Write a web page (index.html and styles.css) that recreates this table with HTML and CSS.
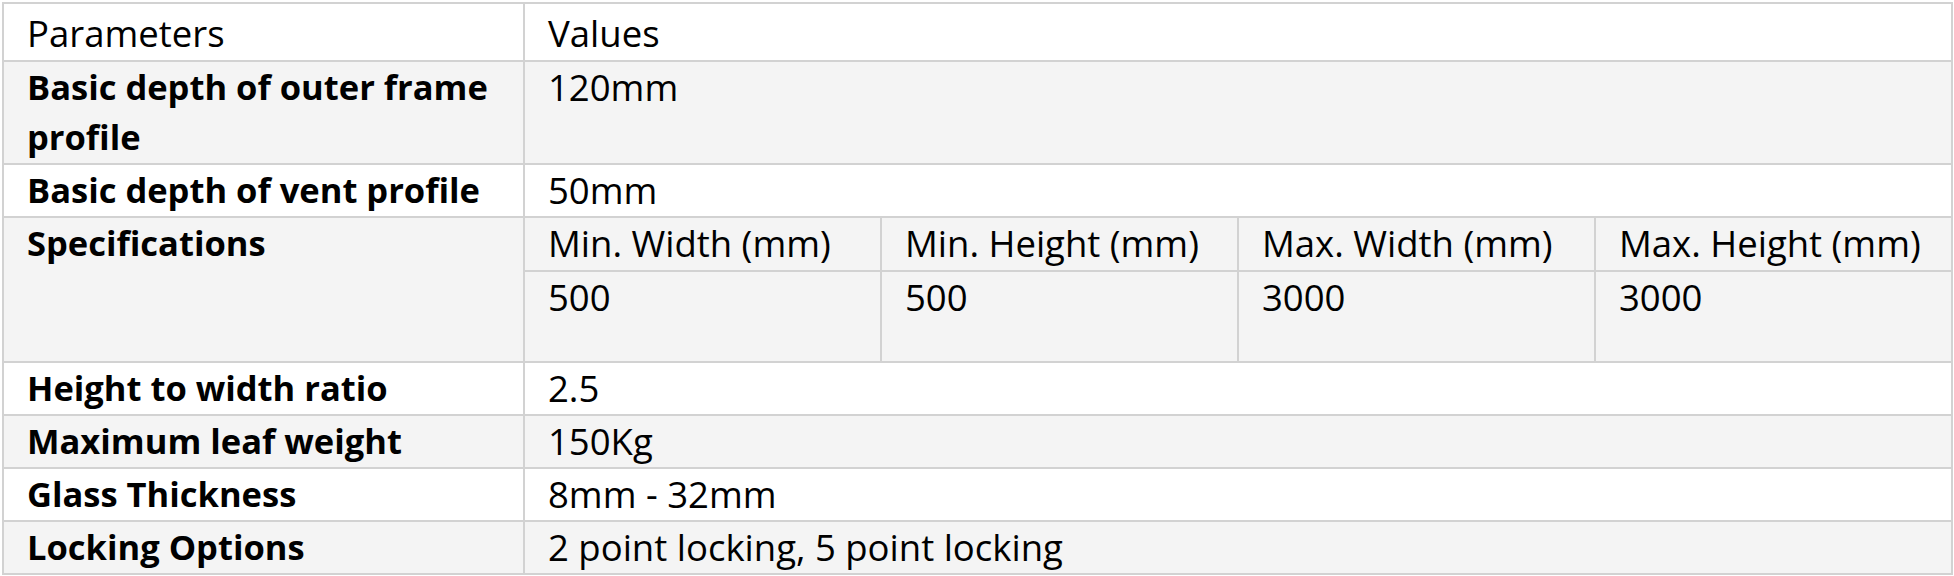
FILE: index.html
```html
<!DOCTYPE html>
<html lang="en">
<head>
<meta charset="utf-8">
<title>Parameters</title>
<link rel="stylesheet" href="styles.css">
</head>
<body>
<table class="spec-table">
  <colgroup>
    <col class="col-param">
    <col class="col-val">
    <col class="col-val">
    <col class="col-val">
    <col class="col-val">
  </colgroup>
  <tbody>
    <tr class="row-head">
      <td>Parameters</td>
      <td colspan="4">Values</td>
    </tr>
    <tr class="row-alt row-two">
      <th>Basic depth of outer frame profile</th>
      <td colspan="4">120mm</td>
    </tr>
    <tr class="row-one">
      <th>Basic depth of vent profile</th>
      <td colspan="4">50mm</td>
    </tr>
    <tr class="row-alt row-sub">
      <th rowspan="2">Specifications</th>
      <td>Min. Width (mm)</td>
      <td>Min. Height (mm)</td>
      <td>Max. Width (mm)</td>
      <td>Max. Height (mm)</td>
    </tr>
    <tr class="row-alt row-subval">
      <td>500</td>
      <td>500</td>
      <td>3000</td>
      <td>3000</td>
    </tr>
    <tr class="row-one">
      <th>Height to width ratio</th>
      <td colspan="4">2.5</td>
    </tr>
    <tr class="row-alt row-one">
      <th>Maximum leaf weight</th>
      <td colspan="4">150Kg</td>
    </tr>
    <tr class="row-one">
      <th>Glass Thickness</th>
      <td colspan="4">8mm - 32mm</td>
    </tr>
    <tr class="row-alt row-one">
      <th>Locking Options</th>
      <td colspan="4">2 point locking, 5 point locking</td>
    </tr>
  </tbody>
</table>
</body>
</html>
```
FILE: styles.css
```css
html, body {
  margin: 0;
  padding: 0;
  background: #ffffff;
}

body {
  padding: 2px 0 0 2px;
}

.spec-table {
  border-collapse: collapse;
  table-layout: fixed;
  width: 1948px;
  font-family: "Open Sans", "Liberation Sans", sans-serif;
  font-size: 36.5px;
  line-height: 50px;
  color: #000000;
}

.col-param {
  width: 521px;
}

.col-val {
  width: 357px;
}

.spec-table th,
.spec-table td {
  border: 2px solid #d2d2d2;
  padding: 0 10px 0 23px;
  text-align: left;
  vertical-align: top;
  white-space: nowrap;
}

.spec-table th {
  font-size: 34.5px;
  font-weight: 700;
  white-space: normal;
}

.row-alt th,
.row-alt td {
  background: #f4f4f4;
}

.row-head td {
  padding-top: 4px;
  height: 52px;
}

.row-two th,
.row-two td {
  height: 101px;
}

.row-one th,
.row-one td {
  height: 51px;
}

.row-sub td {
  height: 52px;
}

.row-subval td {
  height: 89px;
}
```
